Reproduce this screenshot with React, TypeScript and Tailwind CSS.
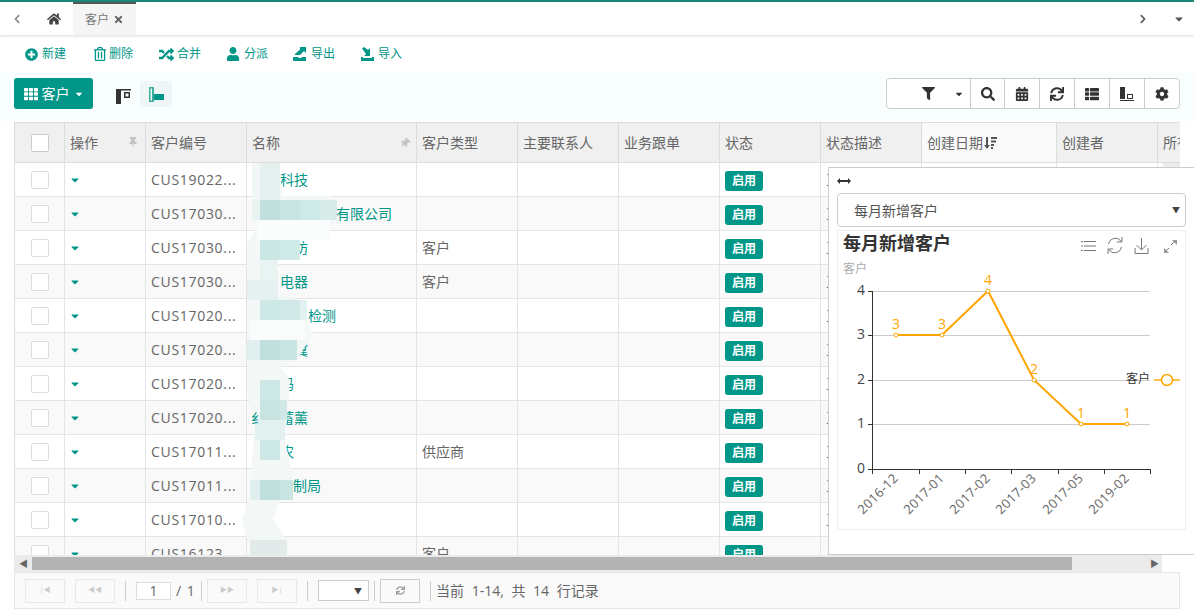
import React from 'react';
import {
  FaCaretDown,
  FaChevronLeft,
  FaChevronRight,
  FaCog,
  FaFilter,
  FaHome,
  FaPlusCircle,
  FaRandom,
  FaSearch,
  FaSync,
  FaTh,
  FaThList,
  FaTimes,
  FaUser,
  FaCalendarAlt,
  FaThumbtack,
  FaRegTrashAlt,
} from 'react-icons/fa';

const FONT = '"Open Sans", "Noto Sans CJK SC", sans-serif';

const rows = [
  { no: 'CUS19022...', name: '科技', pad: 'pl-[33px]', type: '' },
  { no: 'CUS17030...', name: '有限公司', pad: 'pl-[89px]', type: '' },
  { no: 'CUS17030...', name: '坊', pad: 'pl-[47px]', type: '客户' },
  { no: 'CUS17030...', name: '电器', pad: 'pl-[33px]', type: '客户' },
  { no: 'CUS17020...', name: '检测', pad: 'pl-[61px]', type: '' },
  { no: 'CUS17020...', name: '冀', pad: 'pl-[47px]', type: '' },
  { no: 'CUS17020...', name: '码', pad: 'pl-[33px]', type: '' },
  { no: 'CUS17020...', name: '蓄薰', pad: 'pl-[33px]', type: '' },
  { no: 'CUS17011...', name: '农', pad: 'pl-[33px]', type: '供应商' },
  { no: 'CUS17011...', name: '制局', pad: 'pl-[46px]', type: '' },
  { no: 'CUS17010...', name: '', pad: 'pl-[33px]', type: '' },
  { no: 'CUS16123...', name: '', pad: 'pl-[33px]', type: '客户' },
];

function ExportIcon() {
  return (
    <svg width="14" height="14" viewBox="0 0 14 14" fill="#009688">
      <path d="M0 10h5l1 1h2l1-1h4v4H0z" />
      <path d="M7 0h6v6l-2-2-4 4H2V7l5-4.500z" />
    </svg>
  );
}

function ImportIcon() {
  return (
    <svg width="14" height="14" viewBox="0 0 14 14" fill="#009688">
      <path d="M0 10h2v1h9v-1h2v4H0z" />
      <path d="M1 1.500L3 0l4 3 2-2v8H3l2-2z" />
    </svg>
  );
}

function Action({ icon, label, className, box }: { icon: React.ReactNode; label: string; className: string; box: string }) {
  return (
    <div className={`flex items-center text-[12px] text-[#009688] ${className}`}>
      <span className={`flex items-center shrink-0 ${box}`}>{icon}</span>
      <span>{label}</span>
    </div>
  );
}

function ToolBtn({ children, className }: { children: React.ReactNode; className: string }) {
  return (
    <div className={`flex items-center justify-center h-[29px] border-r border-[#ccc] last:border-r-0 text-[#333] ${className}`}>
      {children}
    </div>
  );
}

function HeadCell({ className, children }: { className: string; children?: React.ReactNode }) {
  return (
    <div className={`relative shrink-0 h-full flex items-center px-[5px] border-r border-[#ddd] overflow-hidden whitespace-nowrap ${className}`}>
      {children}
    </div>
  );
}

function Cell({ className, children }: { className: string; children?: React.ReactNode }) {
  return (
    <div className={`shrink-0 h-full flex items-center px-[5px] border-r border-[#e4e4e4] overflow-hidden whitespace-nowrap ${className}`}>
      {children}
    </div>
  );
}

function Table() {
  return (
    <div className="relative mx-[14px] h-[433px] border-l border-[#ddd] overflow-hidden text-[14px] text-[#666]">
      <div className="flex h-[41px] bg-[#f0f0f0] border-y border-[#ddd]">
        <HeadCell className="w-[50px] justify-center">
          <div className="w-[18px] h-[18px] bg-white border border-[#ccc] rounded-[2px]" />
        </HeadCell>
        <HeadCell className="w-[81px]">
          操作
          <FaThumbtack className="absolute right-[7px] top-[14px] text-[#c4c4c4]" size={10} />
        </HeadCell>
        <HeadCell className="w-[101px]">客户编号</HeadCell>
        <HeadCell className="w-[170px]">
          名称
          <FaThumbtack className="absolute right-[6px] top-[15px] rotate-45 text-[#c4c4c4]" size={10} />
        </HeadCell>
        <HeadCell className="w-[101px]">客户类型</HeadCell>
        <HeadCell className="w-[101px]">主要联系人</HeadCell>
        <HeadCell className="w-[101px]">业务跟单</HeadCell>
        <HeadCell className="w-[101px]">状态</HeadCell>
        <HeadCell className="w-[101px]">状态描述</HeadCell>
        <HeadCell className="w-[135px] bg-[#f9f9f9]">
          创建日期
          <svg width="13" height="12" viewBox="0 0 13 12" fill="#555" className="ml-[1px]">
            <path d="M2 0h2v8h2l-3 4-3-4h2zM7 0h6v2H7zM7 3.500h5v2H7zM7 7h3v2H7zM7 10h2v2H7z" />
          </svg>
        </HeadCell>
        <HeadCell className="w-[101px]">创建者</HeadCell>
        <HeadCell className="w-[22px] border-r-0">所有者</HeadCell>
      </div>
      {rows.map((r, i) => (
        <div key={i} className={`flex h-[34px] border-b border-[#e4e4e4] ${i % 2 ? 'bg-[#f9f9f9]' : 'bg-white'}`}>
          <Cell className="w-[50px] justify-center">
            <div className="w-[18px] h-[18px] bg-white border border-[#ddd] rounded-[2px]" />
          </Cell>
          <Cell className="w-[81px]">
            <FaCaretDown className="text-[#009688] -ml-[1px]" size={12} />
          </Cell>
          <Cell className="w-[101px] tracking-[0.7px]">{r.no}</Cell>
          <Cell className={`w-[170px] text-[#009688] ${r.pad}`}>{r.name}</Cell>
          <Cell className="w-[101px]">{r.type}</Cell>
          <Cell className="w-[101px]" />
          <Cell className="w-[101px]" />
          <Cell className="w-[101px]">
            <span className="mt-[2px] bg-[#009688] text-white text-[12px] font-bold px-[7px] h-[20px] leading-[20px] rounded-[3px]">启用</span>
          </Cell>
          <Cell className="w-[101px]">{i < 11 ? '正常' : ''}</Cell>
          <Cell className="w-[135px]" />
          <Cell className="w-[101px]" />
          <Cell className="w-[22px] border-r-0" />
        </div>
      ))}
      <div className="absolute right-0 top-[41px] w-[17px] h-[392px] bg-[#ebebeb]" />
      <Smear />
    </div>
  );
}

// the blurred-out customer names, page coordinates shifted into the table box
function Smear() {
  const blocks = [
    [252, 163, 8, 37, '#f1f7f6'], [260, 163, 20, 37, '#e3f0ee'],
    [252, 200, 8, 20, '#e8f3f2'], [260, 200, 20, 20, '#bfe0dc'], [280, 200, 20, 20, '#c8e5e2'], [300, 200, 20, 20, '#cfe9e6'], [320, 200, 17, 20, '#d8ecea'],
    [257, 220, 73, 20, '#fbfdfd'],
    [260, 240, 20, 20, '#cbe7e4'], [280, 240, 20, 20, '#cfe9e6'], [260, 260, 18, 20, '#e8f3f2'], [247, 280, 31, 20, '#e4f1f0'],
    [260, 300, 20, 20, '#cde8e5'], [280, 300, 20, 20, '#d0e9e7'], [300, 300, 7, 20, '#e2f0ef'],
    [250, 320, 55, 20, '#fafcfc'],
    [247, 340, 13, 20, '#e0f0ef'], [260, 340, 20, 20, '#c0e0dd'], [280, 340, 17, 20, '#c9e4e2'],
    [260, 380, 20, 20, '#cde7e4'], [260, 400, 20, 20, '#c8e4e1'], [280, 400, 7, 20, '#cfe8e5'], [255, 420, 30, 20, '#e2f0ef'],
    [260, 440, 20, 20, '#cde7e4'], [250, 480, 10, 20, '#e0efee'], [260, 480, 20, 20, '#bfe0dd'], [280, 480, 13, 20, '#c9e5e2'],
    [250, 540, 37, 17, '#e3eaea'],
  ] as const;
  return (
    <svg className="absolute -left-px top-0" width="1166" height="433" viewBox="14 122 1166 433">
      <path
        d="M258 163H278L283 196H330L337 200V218L330 230L300 240L278 257V293L307 303V323L313 333L297 360L280 367L290 380L287 420L285 440L293 480L280 500L273 520L287 540L280 557H260L247 540L242 520L252 493V460L255 427L247 393V293L247 243L257 227L253 203L252 173Z"
        fill="#f3f8f7"
      />
      {blocks.map(([x, y, w, h, c], i) => (
        <rect key={i} x={x} y={y} width={w} height={h} fill={c} />
      ))}
      <text x="251" y="423" fontSize="14" fill="#009688">纟</text>
    </svg>
  );
}

function Chart() {
  const pts: [number, number, string][] = [
    [896, 335, '3'], [942, 335, '3'], [988, 291, '4'], [1034, 380, '2'], [1081, 424, '1'], [1127, 424, '1'],
  ];
  const labels = ['2016-12', '2017-01', '2017-02', '2017-03', '2017-05', '2019-02'];
  const gy = [[291, '4'], [335, '3'], [380, '2'], [424, '1'], [469, '0']] as const;
  const line = pts.map((p) => `${p[0]},${p[1]}`).join(' ');
  return (
    <svg width="347" height="298" viewBox="838 231 347 298" className="block" style={{ fontFamily: FONT }}>
      <text x="843" y="250" fontSize="18" fontWeight="bold" fill="#333">每月新增客户</text>
      <text x="843" y="273" fontSize="12" fill="#aaa">客户</text>
      {/* toolbox */}
      <g fill="none" stroke="#777" strokeWidth="1">
        <path d="M1084 241.500h12M1084 246h12M1084 250.500h12" />
        <path d="M1081 241.500h2M1081 246h2M1081 250.500h2" />
        <path d="M1108.500 244a7 7 0 0 1 12.500-3M1121.500 247a7 7 0 0 1-12.500 3" />
        <path d="M1122 237v5h-5M1108 254v-5h5" />
        <path d="M1141.500 238v11M1136.500 245l5 5 5-5M1135 248v5.500h13V248" />
        <path d="M1171 245l4-4M1165 252l4-4" />
      </g>
      <path d="M1172 240h5v5zM1169 253h-5v-5z" fill="#999" />
      {gy.map(([y, t]) => (
        <g key={t}>
          {t !== '0' && <line x1="872" x2="1150" y1={y + 0.5} y2={y + 0.5} stroke="#ccc" />}
          <line x1="868" x2="872" y1={y + 0.5} y2={y + 0.5} stroke="#333" />
          <text x="865" y={y + 4} fontSize="14" textAnchor="end" fill="#444">{t}</text>
        </g>
      ))}
      <line x1="872.500" x2="872.500" y1="291" y2="469" stroke="#333" />
      <line x1="868" x2="1151" y1="469.500" y2="469.500" stroke="#333" />
      {[872, 919, 965, 1011, 1058, 1104, 1150].map((x) => (
        <line key={x} x1={x + 0.5} x2={x + 0.5} y1="469" y2="474" stroke="#333" />
      ))}
      {labels.map((l, i) => (
        <text key={l} x={pts[i][0] + 3} y="479" fontSize="13" letterSpacing="0.3" fill="#666" textAnchor="end" transform={`rotate(-45 ${pts[i][0] + 3} 479)`}>{l}</text>
      ))}
      <polyline points={line} fill="none" stroke="#ffa500" strokeWidth="2" />
      {pts.map(([x, y, t], i) => (
        <g key={i}>
          <circle cx={x} cy={y} r="2" fill="#fff" stroke="#ffa500" />
          <text x={x} y={y - 6} fontSize="14" textAnchor="middle" fill="#ffa500">{t}</text>
        </g>
      ))}
      <text x="1150" y="383" fontSize="12" textAnchor="end" fill="#333">客户</text>
      <line x1="1154" x2="1180" y1="380" y2="380" stroke="#ffc04d" strokeWidth="2" />
      <circle cx="1167" cy="380" r="5.500" fill="#fff" stroke="#ffa500" strokeWidth="1.500" />
    </svg>
  );
}

function ChartPanel() {
  return (
    <div className="absolute left-[828px] top-[167px] w-[370px] h-[388px] bg-white border border-[#ccc] pl-[8px] pt-[8px]">
      <svg width="14" height="8" viewBox="0 0 14 8" className="block mb-[8px] mt-[1px]">
        <path d="M0 4l3-3v2h8V1l3 3-3 3V5H3v2z" fill="#333" />
      </svg>
      <div className="w-[349px] h-[34px] border border-[#ccc] rounded-[4px] flex items-center pl-[16px] pr-[5px] justify-between text-[14px] text-[#555]">
        <span>每月新增客户</span>
        <span className="text-[8px] text-[#444]">▼</span>
      </div>
      <div className="w-[349px] h-[300px] mt-[3px] border border-[#eee] ">
        <Chart />
      </div>
    </div>
  );
}

function PagerBtn({ children, className }: { children: string; className: string }) {
  return (
    <div className={`w-[40px] h-[24px] border border-[#e8e8e8] flex items-center justify-center text-[7px] text-[#ccc] ${className}`}>
      {children}
    </div>
  );
}

function Sep({ className }: { className: string }) {
  return <div className={`w-px h-[20px] bg-[#ccc] ${className}`} />;
}

export default function App() {
  return (
    <div className="relative w-[1194px] h-[613px] overflow-hidden bg-white" style={{ fontFamily: FONT }}>
      <div className="h-[35px] border-t-2 border-[#1a8a78] flex items-center shadow-[0_1px_3px_rgba(0,0,0,0.15)] relative">
        <FaChevronLeft className="ml-[12px] text-[#888]" size={10} />
        <FaHome className="ml-[25px] text-[#444]" size={14} />
        <div className="ml-[12px] w-[63px] h-[33px] bg-[#f5f5f5] border-t-2 border-[#555] flex items-center pl-[12px] gap-[4px] text-[12px] text-[#777]">
          客户
          <FaTimes className="text-[#666]" size={11} />
        </div>
        <FaChevronRight className="ml-auto text-[#555]" size={10} />
        <FaCaretDown className="ml-[25px] mr-[9px] text-[#555]" size={12} />
      </div>
      <div className="h-[37px] flex items-center pl-[25px] pt-[1px]">
        <Action className="w-[68px]" box="w-[17px]" icon={<FaPlusCircle size={13} />} label="新建" />
        <Action className="w-[66px]" box="w-[16px]" icon={<FaRegTrashAlt size={14} />} label="删除" />
        <Action className="w-[67px]" box="w-[18px]" icon={<FaRandom size={15} />} label="合并" />
        <Action className="w-[67px]" box="w-[18px]" icon={<FaUser size={14} />} label="分派" />
        <Action className="w-[68px]" box="w-[18px]" icon={<ExportIcon />} label="导出" />
        <Action className="w-[68px]" box="w-[17px]" icon={<ImportIcon />} label="导入" />
      </div>
      <div className="h-[50px] bg-[#f9fffe] flex items-start pl-[14px] pr-[14px] pt-[6px]">
        <div className="w-[79px] h-[31px] bg-[#009688] rounded-[3px] flex items-center justify-center gap-[4px] text-white text-[14px]">
          <FaTh size={14} />
          客户
          <FaCaretDown size={10} />
        </div>
        <div className="ml-[23px] mt-[11px]">
          <svg width="15" height="15" viewBox="0 0 15 15" className="block">
            <path d="M0 0h15v1.500H5V15H0zM8 3h6v6H8zm1.500 1.500v3h3v-3z" fill="#333" fillRule="evenodd" />
          </svg>
        </div>
        <div className="ml-[9px] w-[32px] h-[26px] mt-[3px] bg-[#f0f6f5] flex items-center justify-center">
          <svg width="15" height="15" viewBox="0 0 15 15">
            <path d="M0 0h5v15H0zM1.500 1.500V13.500H3V1.500z" fill="#3fae9f" fillRule="evenodd" />
            <path d="M5 7h10v6H5z" fill="#009688" />
          </svg>
        </div>
        <div className="ml-auto flex h-[31px] border border-[#ccc] rounded-[4px] bg-white">
          <ToolBtn className="w-[84px] pl-[29px] gap-[19px]">
            <FaFilter size={13} />
            <FaCaretDown size={10} />
          </ToolBtn>
          <ToolBtn className="w-[34px]"><FaSearch size={14} /></ToolBtn>
          <ToolBtn className="w-[35px]"><FaCalendarAlt size={14} /></ToolBtn>
          <ToolBtn className="w-[35px]"><FaSync size={14} /></ToolBtn>
          <ToolBtn className="w-[35px]"><FaThList size={14} /></ToolBtn>
          <ToolBtn className="w-[35px]">
            <svg width="14" height="14" viewBox="0 0 14 14">
              <path d="M0 0h5v12H0zM7 7h6v5H7zm1 1v3h4V8zM0 13h14v1H0z" fill="#333" fillRule="evenodd" />
            </svg>
          </ToolBtn>
          <ToolBtn className="w-[34px]"><FaCog size={14} /></ToolBtn>
        </div>
      </div>
      <Table />
      <div className="ml-[14px] w-[1148px] h-[17px] bg-[#ebebeb] flex items-center text-[#666]">
        <span className="w-[18px] pl-[5px] text-[9px]">◀</span>
        <div className="w-[1040px] h-[13px] bg-[#b3b3b3]" />
        <span className="ml-[78px] text-[9px]">▶</span>
      </div>
      <div className="mx-[14px] h-[37px] border border-[#e6e6e6] bg-[#fafafa] flex items-center pl-[10px] text-[14px] text-[#666]">
        <PagerBtn className="">|◀</PagerBtn>
        <PagerBtn className="ml-[10px]">◀◀</PagerBtn>
        <Sep className="ml-[10px]" />
        <div className="ml-[10px] w-[35px] h-[18px] bg-white border border-[#ddd] flex items-center justify-center leading-none">1</div>
        <span className="ml-[5px] w-[21px] tracking-[1px] whitespace-nowrap">/ 1</span>
        <Sep className="ml-[4px]" />
        <PagerBtn className="ml-[5px]">▶▶</PagerBtn>
        <PagerBtn className="ml-[10px]">▶|</PagerBtn>
        <Sep className="ml-[10px]" />
        <div className="ml-[10px] w-[51px] h-[21px] bg-white border border-[#ccc] flex items-center justify-end pr-[6px] text-[8px] text-[#444]">▼</div>
        <Sep className="ml-[5px]" />
        <div className="ml-[5px] w-[40px] h-[24px] border border-[#ccc] flex items-center justify-center">
          <FaSync size={9} className="text-[#999]" />
        </div>
        <Sep className="ml-[10px]" />
        <span className="ml-[5px] [word-spacing:4px] whitespace-nowrap">当前 1-14, 共 14 行记录</span>
      </div>
      <ChartPanel />
    </div>
  );
}
